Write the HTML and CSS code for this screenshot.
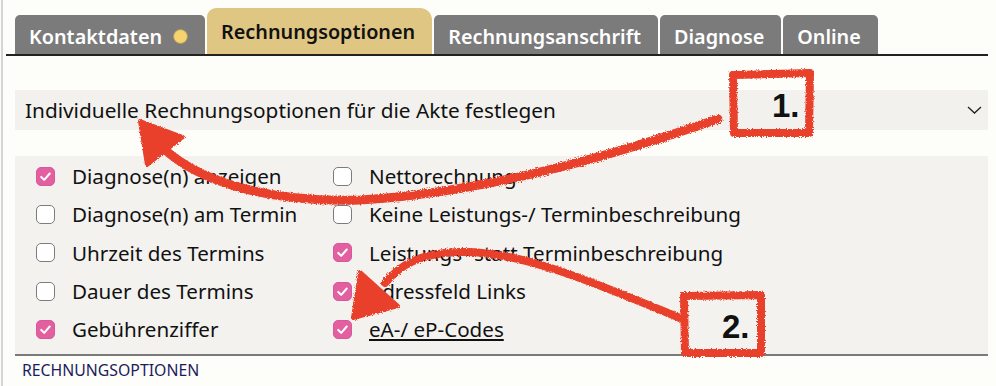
FILE: index.html
```html
<!DOCTYPE html>
<html>
<head>
	<meta charset="UTF-8">
	<title>Rechnungsoptionen</title>
	<link rel="stylesheet" href="styles.css">
</head>
<body>
	<div class="page">
		<div class="tabs">
			<div class="tab">Kontaktdaten <span class="dot"></span></div>
			<div class="tab active">Rechnungsoptionen</div>
			<div class="tab">Rechnungsanschrift</div>
			<div class="tab">Diagnose</div>
			<div class="tab">Online</div>
		</div>

		<div class="section-head">
			<span>Individuelle Rechnungsoptionen für die Akte festlegen</span>
			<svg class="chevron" width="15" height="8" viewBox="0 0 15 8"><path d="M1 1 L7.5 7 L14 1" fill="none" stroke="#222" stroke-width="1.3"/></svg>
		</div>

		<div class="options">
			<label class="option"><span class="box checked"><svg viewBox="0 0 20 20"><path d="M5 10.5 L8.5 14 L15 6.5" /></svg></span>Diagnose(n) anzeigen</label>
			<label class="option"><span class="box"></span>Nettorechnung</label>

			<label class="option"><span class="box"></span>Diagnose(n) am Termin</label>
			<label class="option"><span class="box"></span>Keine Leistungs-/ Terminbeschreibung</label>

			<label class="option"><span class="box"></span>Uhrzeit des Termins</label>
			<label class="option"><span class="box checked"><svg viewBox="0 0 20 20"><path d="M5 10.5 L8.5 14 L15 6.5" /></svg></span>Leistungs- statt Terminbeschreibung</label>

			<label class="option"><span class="box"></span>Dauer des Termins</label>
			<label class="option"><span class="box checked"><svg viewBox="0 0 20 20"><path d="M5 10.5 L8.5 14 L15 6.5" /></svg></span>Adressfeld Links</label>

			<label class="option"><span class="box checked"><svg viewBox="0 0 20 20"><path d="M5 10.5 L8.5 14 L15 6.5" /></svg></span>Gebührenziffer</label>
			<label class="option"><span class="box checked"><svg viewBox="0 0 20 20"><path d="M5 10.5 L8.5 14 L15 6.5" /></svg></span><a href="#" class="link">eA-/ eP-Codes</a></label>
		</div>

		<div class="footer">RECHNUNGSOPTIONEN</div>
	</div>

	<!-- hand drawn hints on top of the form -->
	<svg class="marks" width="996" height="386" viewBox="0 0 996 386">
		<defs>
			<filter id="crayon" x="-10%" y="-10%" width="120%" height="120%">
				<feTurbulence type="fractalNoise" baseFrequency="0.8" numOctaves="2" seed="3" result="noise"/>
				<feDisplacementMap in="SourceGraphic" in2="noise" scale="4"/>
			</filter>
		</defs>
		<g filter="url(#crayon)" fill="none" stroke="#e8412b" stroke-linecap="round" stroke-linejoin="round">
			<path d="M733 75 L810 73 L809 133 L734 133 Z" stroke-width="8"/>
			<path d="M718 119 C 640 146 500 192 360 200 C 260 203 195 178 163 148" stroke-width="9"/>
			<polygon points="140,121 183,137 147,165" fill="#e8412b" stroke-width="4"/>

			<path d="M684 296 L761 295 L761 353 L685 353 Z" stroke-width="8"/>
			<path d="M680 318 C 600 285 520 250 460 252 C 420 253 400 265 385 283" stroke-width="8"/>
			<polygon points="353,318 360,272 398,306" fill="#e8412b" stroke-width="4"/>
		</g>
		<text x="772" y="117" class="mark-num">1.</text>
		<text x="722" y="338" class="mark-num">2.</text>
	</svg>
</body>
</html>
```

FILE: styles.css
```css
body {
	margin: 0;
	background-color: #fdfdfa;
	font-family: "Noto Sans", "Open Sans", sans-serif;
	color: #111;
}
.page {
	position: relative;
	width: 982px;
	height: 386px;
	margin-left: 1px;
	border-left: 2px solid #d5d5d5;
	padding-left: 3px;
	box-sizing: content-box;
}

/* tabs */
.tabs {
	display: flex;
	align-items: flex-end;
	gap: 2px;
	padding: 8px 0 0 9px;
	border-bottom: 2px solid #222;
}
.tab {
	display: flex;
	align-items: center;
	gap: 11px;
	height: 39px;
	padding: 3px 17px 0 14px;
	background-color: #7b7b7b;
	color: #fff;
	font-size: 19.8px;
	font-weight: 600;
	border-radius: 5px 5px 0 0;
	box-sizing: border-box;
}
.tab.active {
	height: 46px;
	padding-top: 0;
	background-color: #e0c683;
	color: #111;
	border-radius: 9px 12px 0 0;
}
.dot {
	width: 15px;
	height: 15px;
	border-radius: 50%;
	background-color: #f6d36f;
	border: 1px solid #a8946a;
	box-sizing: border-box;
}

/* collapsible head */
.section-head {
	display: flex;
	justify-content: space-between;
	align-items: center;
	height: 40px;
	margin: 34px 0 0 9px;
	padding: 0 6px 0 10px;
	background-color: #f2f1ee;
	font-size: 20.8px;
}

/* checkbox grid */
.options {
	display: grid;
	grid-template-columns: 297px 1fr;
	grid-auto-rows: 38.3px;
	margin: 26px 0 0 9px;
	padding: 1px 0 6px 21px;
	background-color: #f3f2ef;
	border-bottom: 2px solid #7a7a7a;
}
.option {
	display: flex;
	align-items: center;
	gap: 17px;
	font-size: 20.6px;
	white-space: nowrap;
}
.box {
	width: 19px;
	height: 19px;
	border: 1.5px solid #7c7c7c;
	border-radius: 5px;
	background-color: #fff;
	box-sizing: border-box;
	flex-shrink: 0;
}
.box.checked {
	background-color: #e2609f;
	border-color: #d9579a;
}
.box svg {
	display: block;
	width: 100%;
	height: 100%;
}
.box svg path {
	fill: none;
	stroke: #fff;
	stroke-width: 2.4;
	stroke-linecap: round;
	stroke-linejoin: round;
}
.link {
	color: #111;
	text-decoration: underline;
}

.footer {
	padding: 3px 0 0 16px;
	font-size: 15.8px;
	color: #1c1b5e;
}

/* annotation overlay */
.marks {
	position: absolute;
	top: 0;
	left: 0;
	pointer-events: none;
}
.mark-num {
	font-family: "Liberation Sans", Arial, sans-serif;
	font-weight: bold;
	font-size: 33px;
	fill: #111;
}
```
